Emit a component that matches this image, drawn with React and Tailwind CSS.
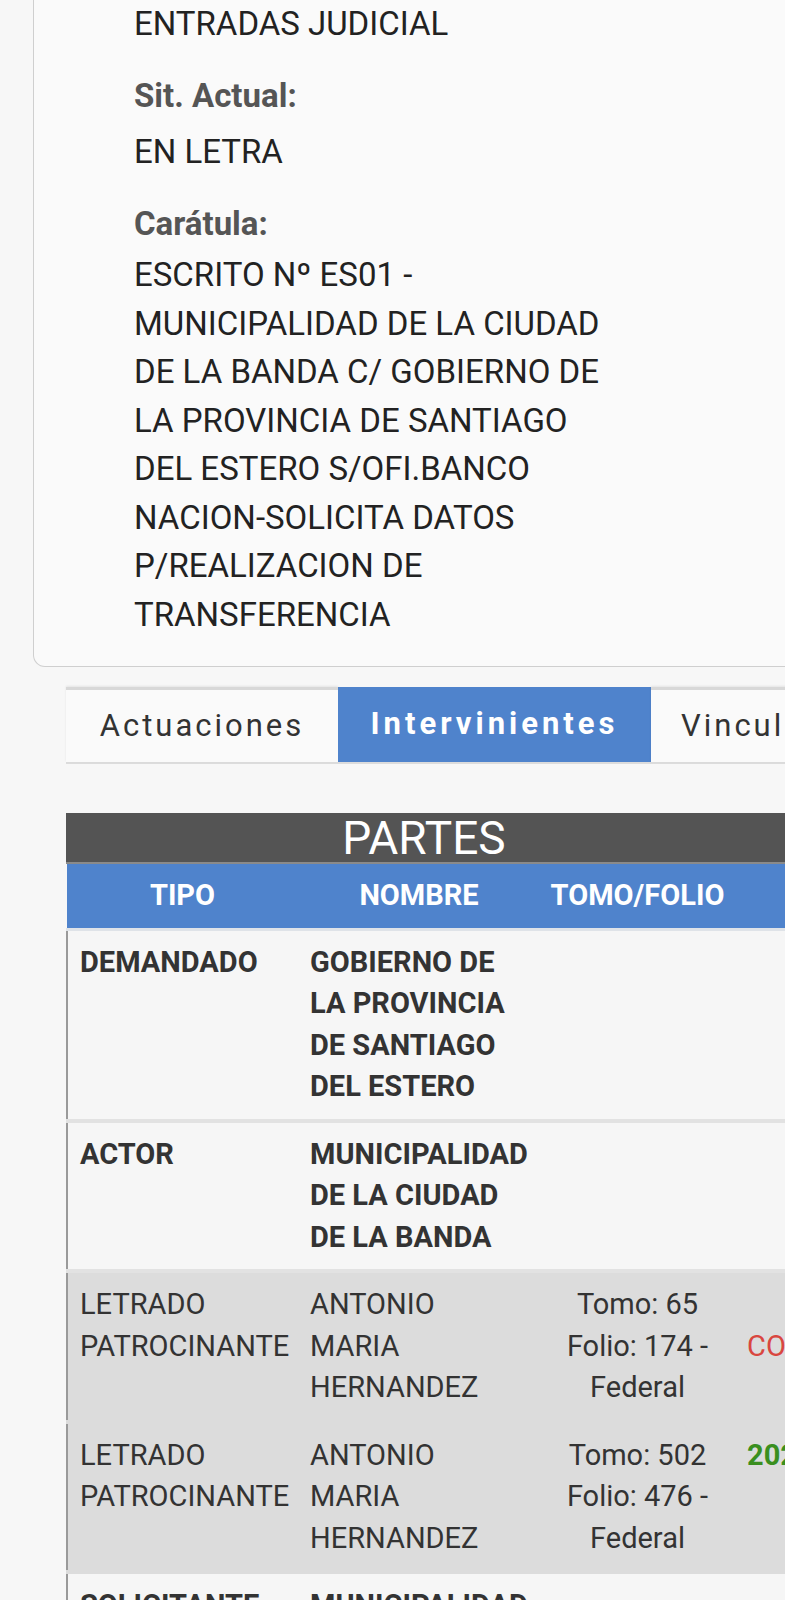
import React from 'react';

const rows = [
    { tipo: 'DEMANDADO', nombre: 'GOBIERNO DE LA PROVINCIA DE SANTIAGO DEL ESTERO', tomo: '', extra: '', bold: true, shade: false },
    { tipo: 'ACTOR', nombre: 'MUNICIPALIDAD DE LA CIUDAD DE LA BANDA', tomo: '', extra: '', bold: true, shade: false },
    { tipo: 'LETRADO PATROCINANTE', nombre: 'ANTONIO MARIA HERNANDEZ', tomo: 'Tomo: 65 Folio: 174 - Federal', extra: 'CONDICIONAL', extraClass: 'text-[#d9463f] align-middle', bold: false, shade: true },
    { tipo: 'LETRADO PATROCINANTE', nombre: 'ANTONIO MARIA HERNANDEZ', tomo: 'Tomo: 502 Folio: 476 - Federal', extra: '2024-03-15', extraClass: 'text-[#3a8f1f] font-bold align-top', bold: false, shade: true },
    { tipo: 'SOLICITANTE', nombre: 'MUNICIPALIDAD DE LA CIUDAD DE LA BANDA', tomo: '', extra: '', bold: true, shade: false },
];

const tabs = [
    { label: 'Actuaciones', active: false, w: 'w-[272px]' },
    { label: 'Intervinientes', active: true, w: 'w-[313px]' },
    { label: 'Vinculados', active: false, w: 'w-[270px]' },
];

export default function App() {
    return (
        <div className="w-[785px] h-[1600px] overflow-hidden bg-[#f7f7f7] text-[#222] font-['Roboto',sans-serif]">
            {/* Detail card */}
            <div className="ml-[33px] w-[800px] bg-[#fafafa] border border-t-0 border-[#cfcfcf] rounded-b-[12px] pl-[100px] pb-[27px]">
                <div className="text-[33px] leading-[47px]">ENTRADAS JUDICIAL</div>
                <div className="mt-[25px] text-[33px] leading-[47px] font-bold text-[#555]">Sit. Actual:</div>
                <div className="mt-[9px] text-[33px] leading-[47px]">EN LETRA</div>
                <div className="mt-[25px] text-[33px] leading-[47px] font-bold text-[#555]">Carátula:</div>
                <div className="mt-[4px] w-[495px] text-[33px] leading-[48.5px]">
                    ESCRITO Nº ES01 - MUNICIPALIDAD DE LA CIUDAD DE LA BANDA C/ GOBIERNO DE LA PROVINCIA DE SANTIAGO DEL ESTERO S/OFI.BANCO NACION-SOLICITA DATOS P/REALIZACION DE TRANSFERENCIA
                </div>
            </div>

            {/* Tabs */}
            <div className="ml-[66px] mt-[20px] flex border-b-2 border-[#dcdcdc] w-[900px]">
                {tabs.map((t) => (
                    <div
                        key={t.label}
                        className={`${t.w} h-[75px] flex items-center shrink-0 text-[31px] ${
                            t.active
                                ? 'bg-[#4f83cc] text-white font-bold justify-center tracking-[4px]'
                                : 'bg-[#fafafa] text-[#333] tracking-[3px] border-t-[3px] border-[#d8d8d8] shadow-[0_-1px_2px_rgba(0,0,0,0.08)]'
                        } ${t.label === 'Actuaciones' ? 'justify-center' : ''} ${t.label === 'Vinculados' ? 'pl-[30px]' : ''}`}
                    >
                        {t.label}
                    </div>
                ))}
            </div>

            {/* Partes table */}
            <div className="ml-[66px] mt-[49px] w-[880px]">
                <div className="bg-[#545454] h-[51px] border-b-2 border-[#8a8a8a]">
                    <div className="w-[716px] text-center text-white text-[46px] leading-[51px]">PARTES</div>
                </div>
                <table className="table-fixed border-collapse w-[878px]">
                    <colgroup>
                        <col className="w-[231px]" />
                        <col className="w-[242px]" />
                        <col className="w-[195px]" />
                        <col className="w-[210px]" />
                    </colgroup>
                    <thead>
                        <tr className="bg-[#4f83cc] text-white text-[29px] font-bold h-[65px] border-b-[3px] border-[#dfe3e8]">
                            <th className="text-center font-bold">TIPO</th>
                            <th className="text-center font-bold">NOMBRE</th>
                            <th className="text-center font-bold">TOMO/FOLIO</th>
                            <th></th>
                        </tr>
                    </thead>
                    <tbody className="text-[29px] leading-[41.5px] text-[#333]">
                        {rows.map((r, i) => (
                            <tr
                                key={i}
                                className={`${r.shade ? 'bg-[#dcdcdc] border-[#dcdcdc]' : 'bg-[#f6f6f6] border-[#e2e2e2]'} border-b-4 ${r.bold ? 'font-bold' : ''}`}
                            >
                                <td className="align-top border-l-2 border-[#9a9a9a] pl-[12px] pr-[4px] py-[11px]">{r.tipo}</td>
                                <td className="align-top px-[12px] py-[11px]">{r.nombre}</td>
                                <td className="align-top text-center px-[14px] py-[11px]">{r.tomo}</td>
                                <td className={`px-[12px] py-[11px] whitespace-nowrap ${r.extraClass || ''}`}>{r.extra}</td>
                            </tr>
                        ))}
                    </tbody>
                </table>
            </div>
        </div>
    );
}
